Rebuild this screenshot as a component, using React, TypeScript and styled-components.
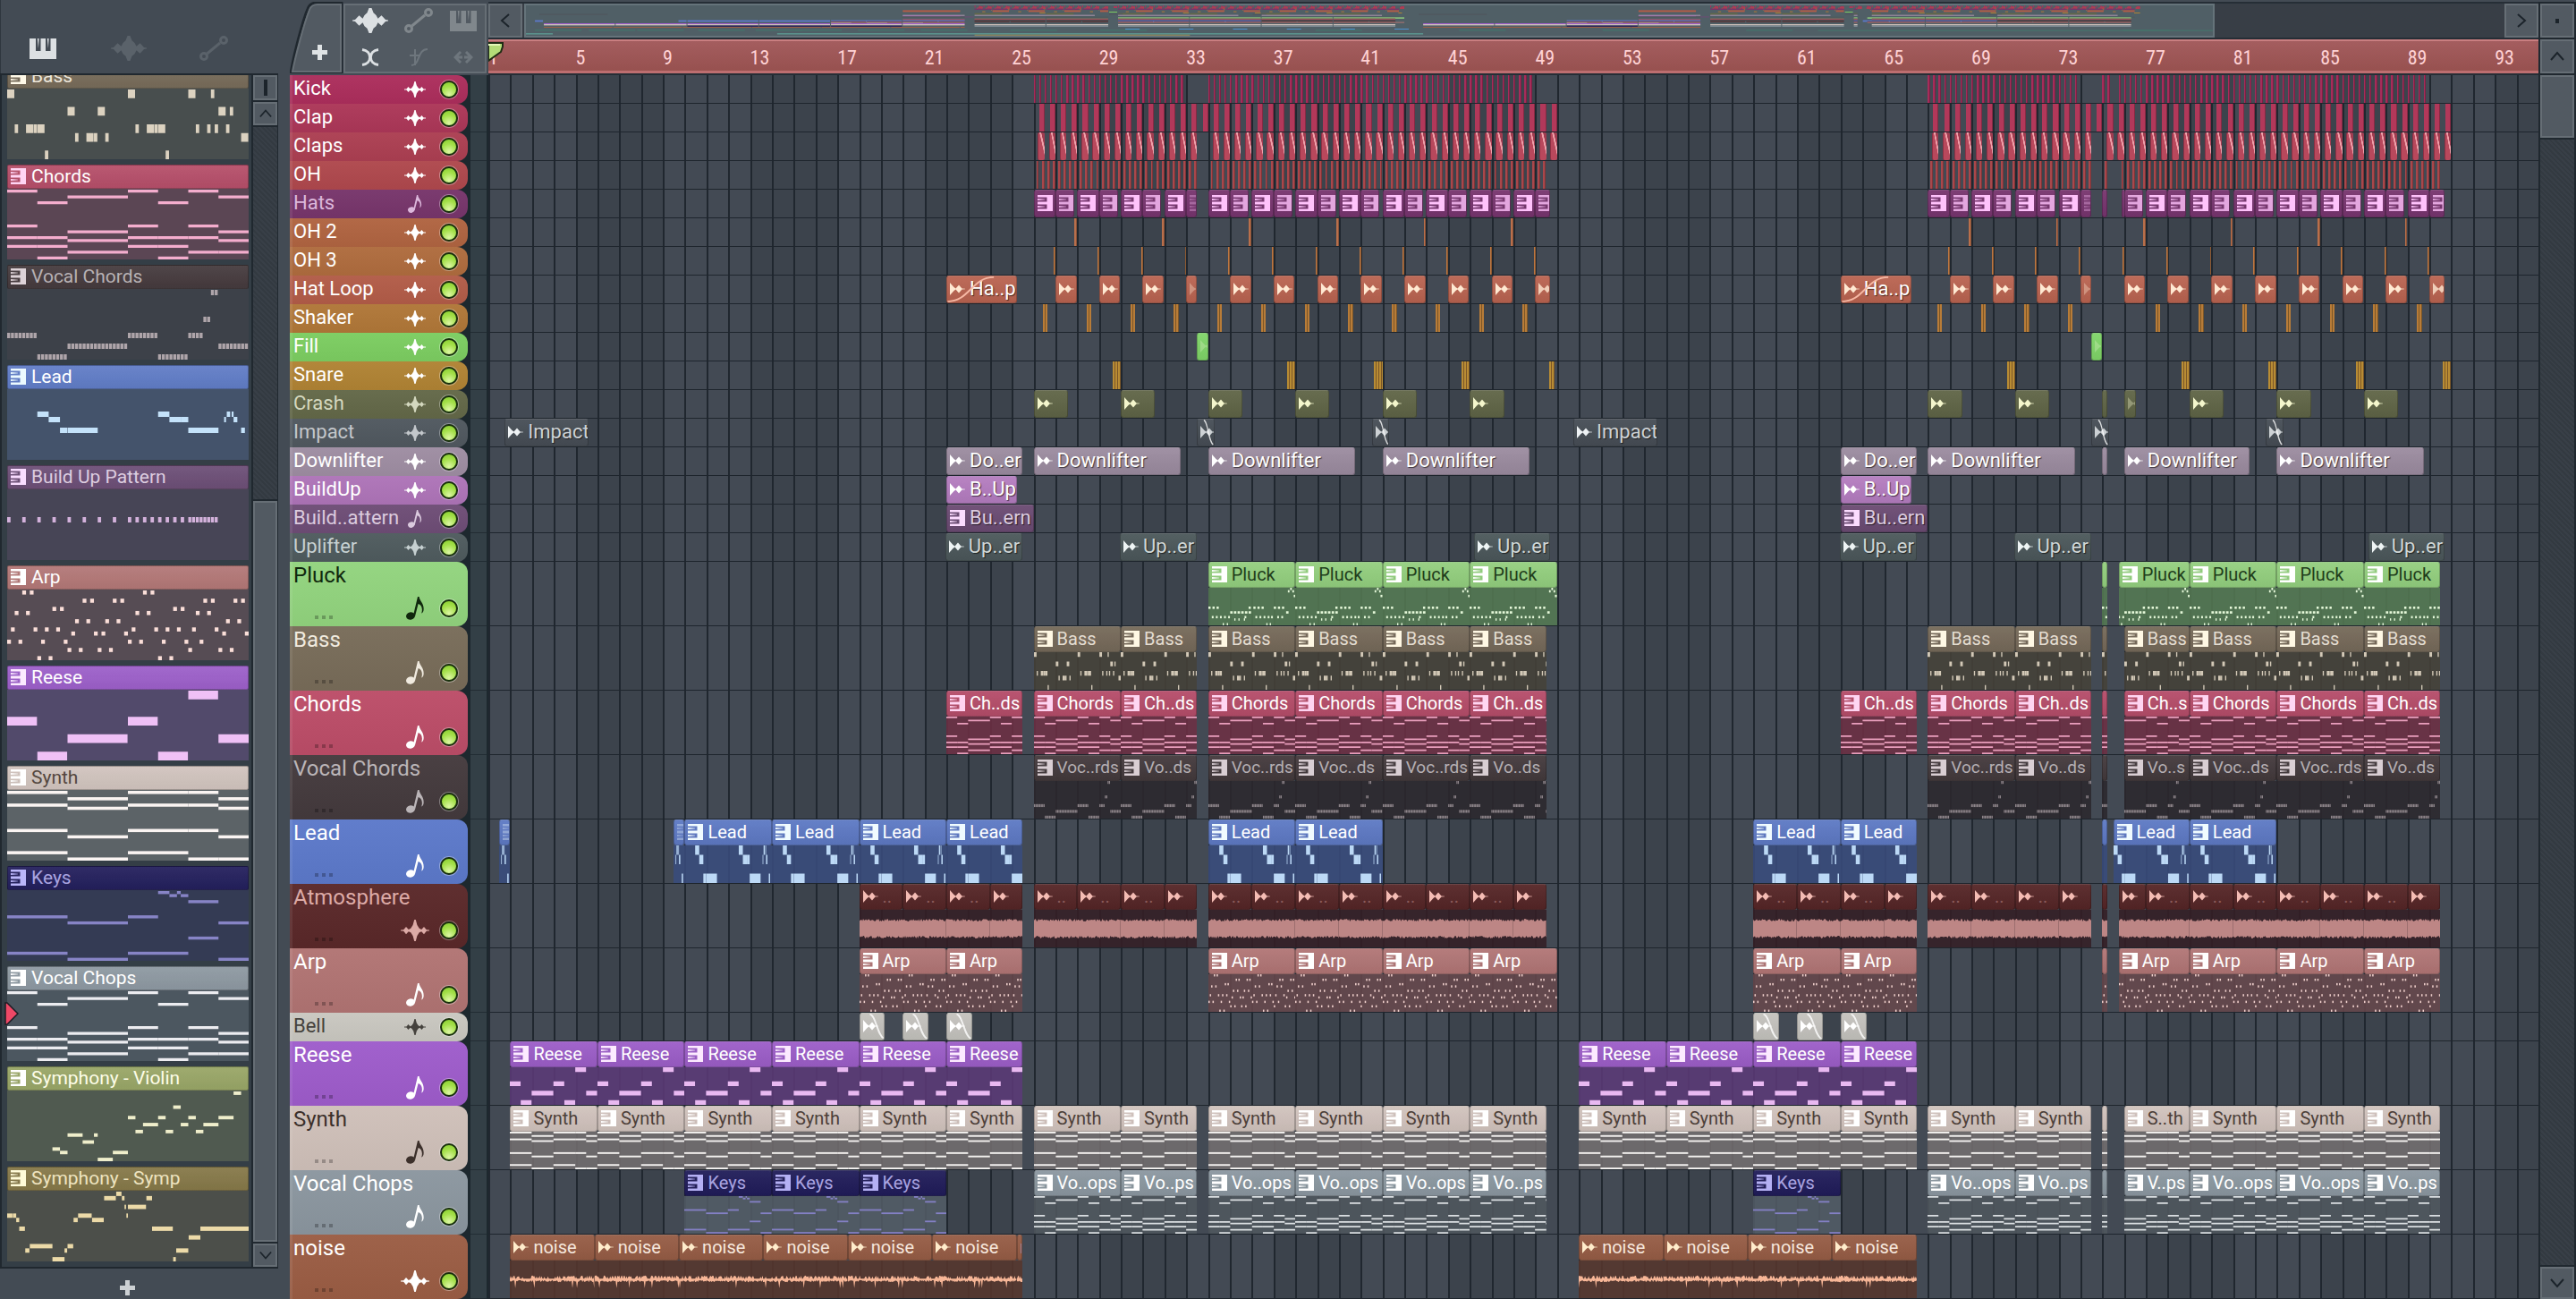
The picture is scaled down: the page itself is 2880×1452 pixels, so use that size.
import React from "react";
import styled, { createGlobalStyle, css } from "styled-components";

/* ------------------------------------------------------------------ */
/* Pattern data: 64 steps per 4-bar pattern, [start, length, row]      */
/* ------------------------------------------------------------------ */

type Note = [number, number, number];
type Pattern = { rows: number; notes: Note[]; listRows?: number; listShift?: number };

const at = (row: number, starts: number[], len = 1): Note[] => starts.map((s) => [s, len, row] as Note);
const column = (start: number, len: number, rows: number[]): Note[] => rows.map((r) => [start, len, r] as Note);
const split = (row: number, from: number, to: number): Note[] =>
  Array.from({ length: to - from }, (_, i) => [from + i, 0.8, row] as Note);

const chordNotes: Note[] = [
  ...column(0, 8, [0, 12, 16, 19]),
  ...column(8, 8, [4, 16, 19, 23]),
  ...column(16, 16, [2, 14, 17, 21]),
  ...column(32, 8, [0, 12, 16, 19]),
  ...column(40, 8, [4, 16, 19, 23]),
  ...column(48, 8, [0, 12, 16, 21]),
  ...column(56, 8, [2, 14, 17, 21]),
];

const patterns: Record<string, Pattern> = {
  bass: {
    rows: 8,
    notes: [
      ...at(0, [0, 32, 48], 1.9), ...at(0, [54], 0.9),
      ...at(2, [16, 24, 56], 1.9), ...at(2, [59], 0.9),
      ...at(4, [2, 7, 34, 39, 50, 53, 55, 58], 0.9), ...at(4, [5, 8, 37, 40], 1.9),
      ...at(5, [18, 23, 26], 0.9), ...at(5, [21, 62], 1.9),
      ...at(7, [10, 42], 0.9),
    ],
  },
  chords: { rows: 24, notes: chordNotes },
  vocalChords: {
    rows: 13,
    notes: [
      ...split(8, 0, 8), ...split(8, 32, 40), ...split(8, 48, 52),
      ...split(10, 16, 32), ...split(10, 56, 64),
      ...split(12, 8, 16), ...split(12, 40, 48),
      ...split(0, 54, 56), ...split(5, 52, 54),
    ],
  },
  lead: {
    rows: 4,
    listRows: 13,
    listShift: 4,
    notes: [
      [8, 3, 0], [11, 3, 1], [14, 1.9, 3], [16, 8, 3],
      [40, 3, 0], [43, 3, 1], [46, 2, 1], [48, 8, 3],
      [58.2, 0.9, 0], [59.5, 0.5, 0], [57.5, 0.5, 1], [60, 1, 1], [62, 1, 3],
    ],
  },
  buildUp: {
    rows: 1,
    listRows: 13,
    listShift: 5,
    notes: [
      ...at(0, [0, 4, 8, 12, 16, 20, 24, 28, 32, 34, 36, 38, 40, 42, 44, 46], 0.9),
      ...split(0, 48, 56),
    ],
  },
  arp: {
    rows: 17,
    notes: [
      ...at(0, [4, 6, 36, 38]),
      ...at(2, [20, 22, 28, 30, 52, 54, 60, 62]),
      ...at(4, [12, 14, 44, 46]),
      ...at(5, [2, 5, 34, 37, 50, 53]),
      ...at(7, [18, 21, 26, 29, 58, 61]),
      ...at(9, [1, 7, 10, 13, 33, 39, 42, 45, 49, 55]),
      ...at(10, [17, 23, 25, 31, 57, 63]),
      ...at(12, [0, 3, 9, 15, 32, 35, 41, 47, 51]),
      ...at(14, [16, 19, 24, 27, 48, 56, 59]),
      ...at(16, [8, 11, 40, 43]),
    ],
  },
  reese: {
    rows: 8,
    notes: [...at(3, [0, 32], 7.9), [16, 15.9, 5], [56, 8, 5], ...at(7, [8, 40], 7.9), [48, 7.9, 0]],
  },
  synth: {
    rows: 22,
    notes: [
      ...column(0, 16, [0, 4, 12, 19]),
      ...column(16, 16, [2, 5, 14, 21]),
      ...column(32, 16, [0, 4, 12, 19]),
      ...column(48, 8, [0, 4, 12, 21]),
      ...column(56, 8, [2, 5, 14, 21]),
    ],
  },
  keys: {
    rows: 23,
    notes: [
      [40, 3, 0], [45, 1, 0], [43, 2, 1], [46, 2, 1], [48, 8, 3],
      [0, 16, 8], [32, 8, 8], [16, 16, 10], [56, 8, 10], [48, 8, 15],
      [0, 16, 20], [32, 16, 20], [16, 16, 22], [56, 8, 22],
    ],
  },
  vocalChops: { rows: 24, notes: chordNotes },
  violin: {
    rows: 20,
    notes: [
      [60, 2, 0], [44, 2, 4], [32, 2, 7], [40, 2, 7], [48, 2, 7], [56, 4, 7],
      [36, 4, 9], [46, 2, 9], [52, 4, 9], [34, 2, 11], [42, 2, 11], [50, 2, 11],
      [16, 4, 12], [23, 1, 12], [20, 3, 14], [12, 2, 16], [14, 2, 17], [28, 4, 17], [24, 4, 19],
    ],
  },
  symp: {
    rows: 16,
    notes: [
      [28.9, 1.4, 0], [25.7, 3.1, 1], [30.4, 0.7, 1], [36.9, 1.5, 1], [31.1, 0.4, 3], [32, 4.8, 3],
      [0, 1.4, 5], [1.5, 0.9, 5], [18.8, 3.6, 5], [31.6, 0.4, 5], [2.4, 0.8, 6], [17.6, 1.1, 6],
      [22.5, 3.1, 6], [3.2, 1.5, 8], [38.4, 5.5, 8], [51.2, 12.8, 8], [48.1, 3.1, 10], [6, 6, 12],
      [16, 1.5, 12], [4.8, 1.1, 13], [15.2, 0.7, 13], [44.8, 3.2, 13], [12, 3.2, 15], [44, 0.7, 15],
    ],
  },
  pluck: {
    rows: 16,
    notes: [
      ...at(0, [60], 1.2), ...at(1, [58.3, 61.6], 1.2), ...at(3, [62.6], 1.4),
      ...at(8, [0, 3, 6, 29.5, 33, 36, 39, 48, 51, 54], 1.6),
      ...at(10, [16, 18.7, 21.4, 24.1, 26.8, 29.5, 57], 1.8),
      ...at(12, [2.5, 5.5, 8.5, 11.5, 14.5, 26.5, 34.5, 37.5, 40.5, 43.5, 46, 50.5, 53.5], 1.3),
      ...at(13, [19, 22, 26], 0.9),
      ...at(15, [10.5, 13.5, 42.5, 45], 0.9),
    ],
  },
};

/* ------------------------------------------------------------------ */
/* Clips and tracks                                                    */
/* ------------------------------------------------------------------ */

const BARS = 94;
const pct = (bars: number) => `${(bars / BARS) * 100}%`;

type ClipKind = "pattern" | "audio" | "hit" | "stripes" | "clap" | "blank";
type Clip = {
  from: number;
  to: number;
  label?: string;
  kind?: ClipKind;
  offset?: number;
  skin?: string;
  dim?: boolean;
  fade?: "in" | "out";
};

type Skin = { head: string; body: string; text: string; icon: string; note: string };
const skins: Record<string, Skin> = {
  pluck: { head: "#93cf7e", body: "#547a53", text: "#1f3d1b", icon: "#ffffff", note: "#e6f9da" },
  bass: { head: "#756959", body: "#464239", text: "#e4ddd1", icon: "#fff8e4", note: "#d3c9b7" },
  chords: { head: "#b54c69", body: "#6d3044", text: "#ffffff", icon: "#ffd5f2", note: "#ea9fbd" },
  vocalChords: { head: "#43393c", body: "#2b282d", text: "#b5afb3", icon: "#d9ced3", note: "#8e858a" },
  lead: { head: "#5d79c4", body: "#394c7d", text: "#ffffff", icon: "#f0fbff", note: "#bcd9f6" },
  atmosphere: { head: "#552526", body: "#341f26", text: "#8a5a5a", icon: "#f4bcb4", note: "#bd8685" },
  arp: { head: "#b17575", body: "#67484c", text: "#ffffff", icon: "#ffffff", note: "#f0d0cc" },
  reese: { head: "#9c5dc8", body: "#5b3a77", text: "#ffffff", icon: "#fceaff", note: "#e9b9f1" },
  synth: { head: "#d1c3bd", body: "#736e70", text: "#4d4039", icon: "#ffffff", note: "#f4f2f0" },
  keys: { head: "#201c59", body: "#525c66", text: "#a8a3e0", icon: "#b4b0f4", note: "#8480c5" },
  vocalChops: { head: "#8b97a0", body: "#50585f", text: "#ffffff", icon: "#ffffff", note: "#dbdfe2" },
  noise: { head: "#965c45", body: "#56372d", text: "#f6e7dd", icon: "#ffeccb", note: "#f7b697" },
};

type Track = {
  name: string;
  color: string;
  text?: string;
  icon: "wave" | "note";
  tall?: boolean;
  skin?: string;
  clips: Clip[];
};

const range = (from: number, to: number, step: number) => {
  const out: number[] = [];
  for (let i = 0; from + i * step <= to + 0.001; i += 1) out.push(from + i * step);
  return out;
};
const hits = (starts: number[], width: number, kind: ClipKind = "hit"): Clip[] =>
  starts.map((s) => ({ from: s, to: s + width, kind }));

/* Consecutive clips from a list of edges, with one label for each. */
const chain = (edges: number[], labels: string[] | string, extra: Partial<Clip> = {}): Clip[] =>
  edges.slice(0, -1).map((from, i) => ({
    from,
    to: edges[i + 1],
    label: Array.isArray(labels) ? labels[i] : labels,
    ...extra,
  }));
const stub = (extra: Partial<Clip> = {}): Clip => ({ from: 74, to: 74.25, kind: "blank", ...extra });

/* The arrangement that the verse and chorus parts share. */
const mainParts = (name: string, cut: string, mid: string, first: string, extra: Partial<Clip> = {}): Clip[] => [
  ...chain([25, 29, 32.5], [name, cut], extra),
  ...chain([33, 37, 41, 45, 48.5], [name, mid, name, cut], extra),
  ...chain([66, 70, 73.5], [name, cut], extra),
  stub(extra),
  { from: 75, to: 78, offset: 1, label: first, ...extra },
  ...chain([78, 82, 86, 89.5], [mid, name, cut], extra),
];

const hatClips = (from: number, to: number, bright: number): Clip[] =>
  range(from, to, 1).map((b) => {
    const pale = (b - bright) % 2 !== 0;
    return { from: b, to: b + (pale ? 0.86 : 1), kind: "pattern" as ClipKind, dim: pale };
  });

const noiseEdges = (from: number, to: number) => [...range(from, to - 0.1, 3.87), to];

const tracks: Track[] = [
  {
    name: "Kick", color: "#ac2e5c", icon: "wave",
    clips: hits([...range(25, 31.75, 0.25), ...range(33, 47.75, 0.25), ...range(66, 72.75, 0.25), 74, 74.25, ...range(74.75, 88.75, 0.25)], 0.1),
  },
  {
    name: "Clap", color: "#ac3758", icon: "wave",
    clips: hits([...range(25.25, 48.75, 0.5), ...range(66.25, 89.75, 0.5)], 0.25),
  },
  {
    name: "Claps", color: "#ac3f52", icon: "wave",
    clips: hits([...range(25.2, 32.2, 0.5), ...range(33.2, 48.7, 0.5), ...range(66.2, 73.2, 0.5), ...range(74.2, 89.7, 0.5)], 0.3, "clap"),
  },
  {
    name: "OH", color: "#af484d", icon: "wave",
    clips: hits([...range(25.12, 32.4, 0.25), ...range(33.12, 48.4, 0.25), ...range(66.12, 73.4, 0.25), 74.12, ...range(74.87, 89.4, 0.25)], 0.12),
  },
  {
    name: "Hats", color: "#77356b", text: "#dcb8dc", icon: "note",
    clips: [
      ...hatClips(25, 31, 25), { from: 32, to: 32.5, kind: "pattern", dim: true },
      ...hatClips(33, 47, 33), { from: 48, to: 48.7, kind: "pattern", dim: true },
      ...hatClips(66, 72, 66), { from: 73, to: 73.5, kind: "pattern", dim: true },
      { from: 74, to: 74.25, kind: "blank" }, { from: 74.9, to: 75, kind: "blank" },
      ...hatClips(75, 88, 66), { from: 89, to: 89.7, kind: "pattern", dim: true },
    ],
  },
  {
    name: "OH 2", color: "#b06441", icon: "wave",
    clips: hits([...range(26.88, 46.88, 4), ...range(67.88, 87.88, 4)], 0.11),
  },
  {
    name: "OH 3", color: "#af6c3e", icon: "wave",
    clips: hits([...range(25.93, 47.93, 2), ...range(66.93, 88.93, 2)], 0.08),
  },
  {
    name: "Hat Loop", color: "#b25c48", icon: "wave",
    clips: [
      { from: 21, to: 24.25, label: "Ha..p", kind: "audio", fade: "in" },
      ...range(26, 30, 2).map((b) => ({ from: b, to: b + 0.97, kind: "audio" as ClipKind })),
      { from: 32, to: 32.5, kind: "audio", dim: true },
      ...range(34, 46, 2).map((b) => ({ from: b, to: b + 0.97, kind: "audio" as ClipKind })),
      { from: 48, to: 48.7, kind: "audio", dim: true },
      { from: 62, to: 65.25, label: "Ha..p", kind: "audio", fade: "in" },
      ...range(67, 71, 2).map((b) => ({ from: b, to: b + 0.97, kind: "audio" as ClipKind })),
      { from: 73, to: 73.5, kind: "audio", dim: true },
      ...range(75, 87, 2).map((b) => ({ from: b, to: b + 0.97, kind: "audio" as ClipKind })),
      { from: 89, to: 89.7, kind: "audio", dim: true },
    ],
  },
  {
    name: "Shaker", color: "#b07738", icon: "wave",
    clips: hits([...range(25.43, 47.43, 2), ...range(66.43, 72.43, 2), ...range(76.43, 88.43, 2)], 0.22, "stripes"),
  },
  {
    name: "Fill", color: "#7ccd61", icon: "wave",
    clips: [{ from: 32.5, to: 33, kind: "audio", dim: true }, { from: 73.5, to: 74, kind: "audio", dim: true }],
  },
  {
    name: "Snare", color: "#b08334", icon: "wave",
    clips: [
      ...hits([28.62, 36.62, 40.62, 44.62], 0.38, "stripes"),
      ...hits([48.62], 0.25, "stripes"),
      ...hits([69.62, 77.62, 81.62, 85.62, 89.62], 0.38, "stripes"),
    ],
  },
  {
    name: "Crash", color: "#636848", text: "#d4d8bf", icon: "wave",
    clips: [
      ...[25, 29, 33, 37, 41, 45, 66, 70, 78, 82, 86].map((b) => ({ from: b, to: b + 1.57, kind: "audio" as ClipKind })),
      stub(), { from: 75, to: 75.55, kind: "audio", dim: true },
    ],
  },
  {
    name: "Impact", color: "#50585f", text: "#c3c7cb", icon: "wave",
    clips: [
      { from: 0.75, to: 4.6, label: "Impact", kind: "audio" },
      { from: 49.75, to: 53.6, label: "Impact", kind: "audio" },
      ...[32.5, 40.5, 73.5, 81.5].map((b) => ({ from: b, to: b + 0.8, kind: "audio" as ClipKind, dim: true, fade: "out" as const })),
    ],
  },
  {
    name: "Downlifter", color: "#9e8da2", icon: "wave",
    clips: [
      { from: 21, to: 24.5, label: "Do..er", kind: "audio" },
      ...[[25, 31.75], [33, 39.75], [41, 47.75], [66, 72.75], [75, 80.75], [82, 88.75]].map(([from, to]) => ({
        from, to, label: "Downlifter", kind: "audio" as ClipKind,
      })),
      { from: 62, to: 65.5, label: "Do..er", kind: "audio" },
      stub(),
    ],
  },
  {
    name: "BuildUp", color: "#ae74b8", icon: "wave",
    clips: [
      { from: 21, to: 24.25, label: "B..Up", kind: "audio" },
      { from: 62, to: 65.25, label: "B..Up", kind: "audio" },
    ],
  },
  {
    name: "Build..attern", color: "#6e4d76", text: "#dbcade", icon: "note",
    clips: [
      { from: 21, to: 25, label: "Bu..ern", kind: "pattern" },
      { from: 62, to: 66, label: "Bu..ern", kind: "pattern" },
    ],
  },
  {
    name: "Uplifter", color: "#4f5b5e", text: "#c6d0d1", icon: "wave",
    clips: [[20.95, 24.5], [28.95, 32.5], [45.2, 48.7], [61.95, 65.5], [69.95, 73.5], [86.2, 89.7]].map(([from, to]) => ({
      from, to, label: "Up..er", kind: "audio" as ClipKind,
    })),
  },
  {
    name: "Pluck", color: "#92d47e", text: "#10280d", icon: "note", tall: true, skin: "pluck",
    clips: [
      ...chain([33, 37, 41, 45, 49], "Pluck"),
      stub(), { from: 74.75, to: 78, offset: 0.75, label: "Pluck" },
      ...chain([78, 82, 86, 89.5], "Pluck"),
    ],
  },
  { name: "Bass", color: "#786c59", text: "#f0eadf", icon: "note", tall: true, skin: "bass", clips: mainParts("Bass", "Bass", "Bass", "Bass") },
  {
    name: "Chords", color: "#bc4d68", icon: "note", tall: true, skin: "chords",
    clips: [
      { from: 21, to: 24.5, label: "Ch..ds" }, { from: 62, to: 65.5, label: "Ch..ds" },
      ...mainParts("Chords", "Ch..ds", "Chords", "Ch..s"),
    ],
  },
  {
    name: "Vocal Chords", color: "#443a3d", text: "#bbb5b8", icon: "note", tall: true, skin: "vocalChords",
    clips: mainParts("Voc..rds", "Vo..ds", "Voc..ds", "Vo..s"),
  },
  {
    name: "Lead", color: "#5c79ca", icon: "note", tall: true, skin: "lead",
    clips: [
      { from: 0.5, to: 1, offset: 3.5, dim: true }, { from: 8.5, to: 9, offset: 3.5, dim: true },
      ...chain([9, 13, 17, 21, 24.5], "Lead"), ...chain([33, 37, 41], "Lead"), ...chain([58, 62, 65.5], "Lead"),
      stub(), { from: 74.5, to: 78, offset: 0.5, label: "Lead" }, { from: 78, to: 82, label: "Lead" },
    ],
  },
  {
    name: "Atmosphere", color: "#5a2829", text: "#dcaaa6", icon: "wave", tall: true, skin: "atmosphere",
    clips: [
      ...chain([17, 19, 21, 23, 24.5], ["..", "..", "..", ""], { kind: "audio" }),
      ...chain([25, 27, 29, 31, 32.5], ["..", "..", "..", ""], { kind: "audio" }),
      ...chain([33, 35, 37, 39, 41, 43, 45, 47, 48.5], ["..", "..", "..", "..", "..", "..", "..", ""], { kind: "audio" }),
      ...chain([58, 60, 62, 64, 65.5], ["..", "..", "..", ""], { kind: "audio" }),
      ...chain([66, 68, 70, 72, 73.5], ["..", "..", "..", ""], { kind: "audio" }),
      stub(),
      ...chain([74.75, 76, 78, 80, 82, 84, 86, 88, 89.5], ["", "..", "..", "..", "..", "..", "..", ""], { kind: "audio" }),
    ],
  },
  {
    name: "Arp", color: "#b17473", icon: "note", tall: true, skin: "arp",
    clips: [
      ...chain([17, 21, 24.5], "Arp"), ...chain([33, 37, 41, 45, 49], "Arp"), ...chain([58, 62, 65.5], "Arp"),
      stub(), { from: 74.75, to: 78, offset: 0.75, label: "Arp" }, ...chain([78, 82, 86, 89.5], "Arp"),
    ],
  },
  {
    name: "Bell", color: "#c9c7c0", text: "#45423d", icon: "wave",
    clips: [17, 19, 21, 58, 60, 62].map((b) => ({ from: b, to: b + 1.18, kind: "audio" as ClipKind, fade: "out" as const })),
  },
  {
    name: "Reese", color: "#9e5ccb", icon: "note", tall: true, skin: "reese",
    clips: [...chain([1, 5, 9, 13, 17, 21, 24.5], "Reese"), ...chain([50, 54, 58, 62, 65.5], "Reese")],
  },
  {
    name: "Synth", color: "#cfc0b9", text: "#3c302b", icon: "note", tall: true, skin: "synth",
    clips: [
      ...chain([1, 5, 9, 13, 17, 21, 24.5], "Synth"), ...chain([50, 54, 58, 62, 65.5], "Synth"),
      ...mainParts("Synth", "Synth", "Synth", "S..th"),
    ],
  },
  {
    name: "Vocal Chops", color: "#8b969f", icon: "note", tall: true, skin: "vocalChops",
    clips: [
      ...chain([9, 13, 17, 21], "Keys", { skin: "keys" }), { from: 58, to: 62, label: "Keys", skin: "keys" },
      ...mainParts("Vo..ops", "Vo..ps", "Vo..ops", "V..ps"),
    ],
  },
  {
    name: "noise", color: "#9b5d44", icon: "wave", tall: true, skin: "noise",
    clips: [
      ...chain(noiseEdges(1, 24.5), "noise", { kind: "audio" }),
      ...chain(noiseEdges(50, 65.5), "noise", { kind: "audio" }),
    ],
  },
];

type ListItem = { name: string; pattern: string; head: string; text: string; icon: string; body: string; note: string; active?: boolean };
const list: ListItem[] = [
  { name: "Bass", pattern: "bass", head: "#776b59", text: "#ece6da", icon: "#fff9e8", body: "#484e4e", note: "#dcd2c0" },
  { name: "Chords", pattern: "chords", head: "#b54e69", text: "#ffffff", icon: "#ffd5f4", body: "#5b4654", note: "#f4adcd" },
  { name: "Vocal Chords", pattern: "vocalChords", head: "#453a3d", text: "#b7b1b4", icon: "#ddd2d7", body: "#3d4149", note: "#afa5aa" },
  { name: "Lead", pattern: "lead", head: "#607cc6", text: "#ffffff", icon: "#ecfaff", body: "#44536b", note: "#c4e2fa" },
  { name: "Build Up Pattern", pattern: "buildUp", head: "#6c4e76", text: "#ddcde0", icon: "#f9dcff", body: "#474556", note: "#d4b2dc" },
  { name: "Arp", pattern: "arp", head: "#b27776", text: "#ffffff", icon: "#ffffff", body: "#564c54", note: "#fbdfd9" },
  { name: "Reese", pattern: "reese", head: "#9c5fc9", text: "#ffffff", icon: "#fbeaff", body: "#524a6b", note: "#efc0f6" },
  { name: "Synth", pattern: "synth", head: "#d0c3bd", text: "#54473f", icon: "#ffffff", body: "#5c6367", note: "#faf4f2" },
  { name: "Keys", pattern: "keys", head: "#231f5c", text: "#a9a4e0", icon: "#bab6fa", body: "#343b54", note: "#8784c6" },
  { name: "Vocal Chops", pattern: "vocalChops", head: "#8d98a1", text: "#ffffff", icon: "#ffffff", body: "#4c5760", note: "#ececf0", active: true },
  { name: "Symphony - Violin", pattern: "violin", head: "#98a566", text: "#fdfde8", icon: "#ffffff", body: "#505a50", note: "#efeecb" },
  { name: "Symphony - Symp", pattern: "symp", head: "#857848", text: "#eee4c0", icon: "#fffbd8", body: "#4c4f4a", note: "#ecdaa8" },
];

/* ------------------------------------------------------------------ */
/* Styles                                                              */
/* ------------------------------------------------------------------ */

const GlobalStyle = createGlobalStyle`
  * { box-sizing: border-box; }
  body {
    margin: 0;
    background: #434b54;
    font-family: Roboto, "Open Sans", sans-serif;
    overflow: hidden;
  }
  button, input { margin: 0; padding: 0; border: 0; font: inherit; }
`;

const hatch = "repeating-linear-gradient(45deg, #333a41 0 2px, #383f47 2px 4px)";

const Shell = styled.div`
  display: flex;
  height: 100vh;
  color: #fff;
`;

const Browser = styled.aside`
  display: flex;
  flex-direction: column;
  width: 311px;
  flex: none;
`;

const BrowserTabs = styled.div`
  display: flex;
  height: 82px;
  padding: 36px 52px 0 27px;
  justify-content: space-between;
  border-left: 1px solid #2f373f;
`;

const IconButton = styled.button<{ $tone?: string }>`
  display: grid;
  place-items: center;
  width: 40px;
  height: 36px;
  background: none;
  color: ${(p) => p.$tone ?? "#dce0e3"};
`;

const BrowserBody = styled.div`
  flex: 1;
  min-height: 0;
  display: flex;
  border: 2px solid #20282f;
  border-right-width: 1px;
`;

const PatternList = styled.div`
  flex: 1;
  min-width: 0;
  display: flex;
  flex-direction: column;
  justify-content: flex-end;
  gap: 6px;
  padding: 0 3px 6px 6px;
  overflow: hidden;
  background: #343e46;
  border-right: 2px solid #20282f;
`;

const PatternItem = styled.article`
  position: relative;
  flex: none;
  height: 106px;
  display: flex;
  flex-direction: column;
`;

const PatternHead = styled.div<{ $color: string; $text: string }>`
  display: flex;
  align-items: center;
  gap: 6px;
  height: 27px;
  padding: 0 0 2px 3px;
  border: 1px solid rgba(0, 0, 0, 0.25);
  border-radius: 2px;
  background: linear-gradient(rgba(255, 255, 255, 0.06), rgba(0, 0, 0, 0.04)), ${(p) => p.$color};
  color: ${(p) => p.$text};
  font-size: 21px;
  line-height: 24px;
`;

const PatternBody = styled.div<{ $color: string; $note: string }>`
  flex: 1;
  min-height: 0;
  padding-top: 1px;
  background: ${(p) => p.$color};
  color: ${(p) => p.$note};
`;

const ActiveMark = styled.svg`
  position: absolute;
  left: -3px;
  top: 40px;
`;

const Stretch = styled.svg`
  display: block;
  width: 100%;
  height: 100%;
`;

const ScrollColumn = styled.div<{ $width: number }>`
  display: flex;
  flex-direction: column;
  flex: none;
  gap: 2px;
  width: ${(p) => p.$width}px;
  background: #20282f;
`;

const bevel = css`
  background: #525a62;
  border: 2px solid #666e75;
  color: #1c242b;
`;

const ScrollButton = styled.button<{ $height: number }>`
  ${bevel}
  display: grid;
  place-items: center;
  flex: none;
  height: ${(p) => p.$height}px;
`;

const ScrollTrack = styled.div<{ $grow: number }>`
  flex: ${(p) => p.$grow} 1 0;
  background: ${hatch};
`;

const ScrollThumb = styled.div<{ $grow: number }>`
  ${bevel}
  flex: ${(p) => p.$grow} 1 0;
`;

const AddPattern = styled.button`
  display: grid;
  place-items: center;
  height: 34px;
  padding: 8px 26px 0 0;
  background: none;
  color: #ccd0d3;
`;

const Playlist = styled.main`
  flex: 1;
  min-width: 0;
  display: flex;
  flex-direction: column;
  padding: 2px 0 0 13px;
`;

const TopRow = styled.div`
  display: flex;
  height: 82px;
  flex: none;
`;

const Corner = styled.div`
  position: relative;
  display: flex;
  width: 222px;
  gap: 2px;
  padding: 2px 2px 2px 0;
`;

const CornerShape = styled.svg`
  position: absolute;
  left: 0;
  top: 0;
`;

const AddTrack = styled.button`
  position: relative;
  width: 58px;
  padding: 34px 0 0 8px;
  background: none;
  color: #dfe3e5;
`;

const Tools = styled.div`
  ${bevel}
  flex: 1;
  position: relative;
  display: grid;
  grid-template-columns: 56px 52px 1fr;
  grid-template-rows: 34px 1fr;
  row-gap: 6px;
  justify-items: center;
  align-items: center;
`;

const TopMain = styled.div`
  flex: 1;
  min-width: 0;
  display: flex;
  flex-direction: column;
  gap: 2px;
  background: #262e36;
  padding: 2px 0 2px;
`;

const OverviewRow = styled.div`
  display: flex;
  gap: 2px;
  height: 38px;
  background: #383e46;
`;

const NavButton = styled.button`
  ${bevel}
  display: grid;
  place-items: center;
  width: 38px;
  flex: none;
`;

const Overview = styled.div`
  flex: 1891 1 0;
  height: 38px;
  border: 2px solid #65737a;
  background: #505f66;
`;

const OverviewRest = styled.div`
  flex: 321 1 0;
`;

const Ruler = styled.div`
  position: relative;
  flex: 1;
  overflow: hidden;
  border-top: 2px solid #c97e80;
  border-bottom: 3px solid #bd6e70;
  background: linear-gradient(#a45d5f, #97514f);
`;

const BarNumber = styled.span`
  position: absolute;
  top: 6px;
  font-family: "Roboto Condensed", "Liberation Sans Narrow", Roboto, sans-serif;
  font-size: 22px;
  line-height: 26px;
  color: #ffd2d4;
`;

const PlayMarker = styled.svg`
  position: absolute;
  left: 0;
  top: 1px;
`;

const Arrangement = styled.div`
  flex: 1;
  min-height: 0;
  display: flex;
  flex-direction: column;
  overflow: hidden;
`;

const TrackRow = styled.section<{ $tall?: boolean }>`
  display: flex;
  flex: none;
  height: ${(p) => (p.$tall ? 72 : 32)}px;
  background: #1d282e;
`;

const TrackHead = styled.div<{ $tall?: boolean; $color: string; $text: string }>`
  display: grid;
  grid-template-columns: 1fr 34px 42px;
  grid-template-rows: ${(p) => (p.$tall ? "32px 1fr" : "1fr")};
  align-items: center;
  justify-items: center;
  width: 199px;
  margin-right: 3px;
  padding-left: 4px;
  border-radius: 0 12px 12px 0;
  background: linear-gradient(rgba(255, 255, 255, 0.03), rgba(0, 0, 0, 0.04)), ${(p) => p.$color};
  box-shadow: inset 3px 0 0 rgba(255, 255, 255, 0.08);
  color: ${(p) => p.$text};
`;

const TrackName = styled.span<{ $tall?: boolean }>`
  justify-self: start;
  width: ${(p) => (p.$tall ? "auto" : "118px")};
  padding-bottom: 2px;
  grid-column: ${(p) => (p.$tall ? "1 / -1" : "1")};
  font-size: ${(p) => (p.$tall ? 24 : 22)}px;
  line-height: 28px;
  white-space: nowrap;
`;

const Dots = styled.span`
  display: flex;
  gap: 4px;
  align-self: end;
  justify-self: start;
  margin: 0 0 8px 24px;
  i {
    width: 4px;
    height: 4px;
    background: rgba(0, 0, 0, 0.25);
  }
`;

const Led = styled.input`
  appearance: none;
  width: 20px;
  height: 20px;
  border: 2px solid #18300c;
  border-radius: 50%;
  background: radial-gradient(circle at 50% 85%, #dcf6a4, #a4e04a 55%, #86cc2c);
  box-shadow: 0 0 0 1px rgba(255, 255, 255, 0.35);
`;

const LaneMargin = styled.div`
  width: 18px;
  background: #333f46;
  border-bottom: 1px solid #222c33;
`;

const Lane = styled.div`
  position: relative;
  flex: 1;
  min-width: 0;
  overflow: hidden;
  margin-left: 2px;
  background:
    linear-gradient(#1e252d, #1e252d) bottom / 100% 1px no-repeat,
    repeating-linear-gradient(90deg, #20272f 0 2px, transparent 2px calc(100% / ${BARS})),
    repeating-linear-gradient(90deg, #434a54 0 calc(400% / ${BARS}), #3c434c calc(400% / ${BARS}) calc(800% / ${BARS}));
`;

const ClipBox = styled.div<{ $tall?: boolean }>`
  position: absolute;
  top: 0;
  height: ${(p) => (p.$tall ? 71 : 31)}px;
  display: flex;
  flex-direction: column;
  overflow: hidden;
`;

const ClipHead = styled.div<{ $color: string; $text: string; $tall?: boolean; $tight?: boolean }>`
  position: relative;
  display: flex;
  align-items: center;
  gap: 5px;
  height: ${(p) => (p.$tall ? 29 : 31)}px;
  padding: 0 0 1px 3px;
  overflow: hidden;
  border: 1px solid rgba(0, 0, 0, 0.22);
  border-top-color: rgba(255, 255, 255, 0.16);
  border-radius: 3px;
  background: linear-gradient(rgba(255, 255, 255, 0.05), rgba(0, 0, 0, 0.06)), ${(p) => p.$color};
  color: ${(p) => p.$text};
  font-size: ${(p) => (p.$tight ? 19 : p.$tall ? 20 : 22)}px;
  line-height: 26px;
  white-space: nowrap;
  text-shadow: ${(p) => (p.$tall ? "none" : "1px 1px 1px rgba(0, 0, 0, 0.6)")};
  svg {
    flex: none;
  }
`;

const ClipBody = styled.div<{ $color: string; $note: string }>`
  flex: 1;
  min-height: 0;
  background: ${(p) => p.$color}e0;
  color: ${(p) => p.$note};
`;

const Hit = styled.div<{ $color: string }>`
  position: absolute;
  top: 0;
  height: 31px;
  background: ${(p) => p.$color};
  border-right: 1px solid rgba(0, 0, 0, 0.25);
`;

const ClapHit = styled(Hit)`
  border: 0;
  border-left: 1px solid #8c3044;
  border-radius: 2px;
  background: linear-gradient(to top right, #b8485c 56%, #f0a0aa 60% 70%, #a03c50 74%);
`;

const StripeHit = styled(Hit)`
  background: repeating-linear-gradient(90deg, ${(p) => p.$color} 0 2px, #7c5728 2px 3px);
  border-right: 0;
`;

const FadeCurve = styled.svg`
  position: absolute;
  inset: 0;
  width: 100%;
  height: 100%;
`;

/* ------------------------------------------------------------------ */
/* Icons                                                               */
/* ------------------------------------------------------------------ */

const PianoSide = ({ color, opacity = 1 }: { color: string; opacity?: number }) => (
  <svg width="17" height="18" viewBox="0 0 17 18" opacity={opacity} aria-hidden="true">
    <path fill={color} d="M0 0H17V18H0V15.500H10.500V10.500H0V7.500H10.500V2.500H0Z" />
    <path fill={color} d="M0 4L8 4.800V5.200L0 6ZM0 12L8 12.800V13.200L0 14Z" />
  </svg>
);

const AudioMark = ({ color, opacity = 1 }: { color: string; opacity?: number }) => (
  <svg width="17" height="18" viewBox="0 0 17 18" opacity={opacity} aria-hidden="true">
    <path fill={color} d="M0 2L4.5 7L6.500 8.6L10 4.5L13.500 8.5L17 8.700V9.3L13.500 9.5L10 13.5L6.500 9.4L4.5 11L0 16Z" />
  </svg>
);

const Wave = ({ w, h, slim }: { w: number; h: number; slim?: boolean }) => (
  <svg width={w} height={h} viewBox="0 0 40 32" preserveAspectRatio="none" aria-hidden="true">
    <path
      fill="currentColor"
      d={
        slim
          ? "M0 15.200L4 15L7.500 10.500L11 14.500L14 13L17 8L19 0H21L23 8L26 13L29 14.500L32.500 10.500L36 15L40 15.200V16.800L36 17L32.500 21.500L29 17.500L26 19L23 24L21 32H19L17 24L14 19L11 17.500L7.500 21.500L4 17L0 16.800Z"
          : "M0 15.400L3 14.800L7.500 9.500L11.500 13.500L13.500 9L16.500 6L18.500 0H21.500L23.500 6L26.500 9L28.500 13.500L32.500 9.500L37 14.800L40 15.400V16.600L37 17.200L32.500 22.500L28.500 18.500L26.500 23L23.500 26L21.500 32H18.500L16.500 26L13.500 23L11.500 18.500L7.500 22.500L3 17.200L0 16.600Z"
      }
    />
  </svg>
);

const NoteIcon = ({ h }: { h: number }) => (
  <svg width={(h * 20) / 26} height={h} viewBox="0 0 20 26" aria-hidden="true">
    <ellipse cx="5" cy="21.5" rx="5" ry="4.2" transform="rotate(-15 5 21.5)" fill="currentColor" />
    <path d="M8 21L13 0H14.6C15 5 21 8 19.4 16C19 17 18 18.5 17.2 18.5C19.2 12 16.5 9 13.6 8L10 22Z" fill="currentColor" />
  </svg>
);

const PianoIcon = () => (
  <svg width="30" height="23" viewBox="0 0 30 23" aria-hidden="true">
    <path fill="currentColor" d="M0 0H7V14H12.500V0H18V14H23.500V0H30V23H0Z" />
    <path fill="currentColor" d="M8.800 0H10.600L9.900 11ZM19.800 0H21.600L20.900 11Z" />
  </svg>
);

const CurveIcon = () => (
  <svg width="32" height="28" viewBox="0 0 32 28" fill="none" stroke="currentColor" strokeWidth="3" aria-hidden="true">
    <circle cx="5" cy="23" r="3.5" />
    <circle cx="27" cy="5" r="3.5" />
    <path d="M8.5 20L23 8" />
  </svg>
);

const PlusIcon = () => (
  <svg width="17" height="17" viewBox="0 0 17 17" aria-hidden="true">
    <path fill="currentColor" d="M6 0H11V6H17V11H11V17H6V11H0V6H6Z" />
  </svg>
);

const Chevron = ({ dir, size = 16 }: { dir: "up" | "down" | "left" | "right"; size?: number }) => {
  const turn = { up: 0, right: 90, down: 180, left: 270 }[dir];
  return (
    <svg width={size} height={size} viewBox="0 0 16 16" aria-hidden="true">
      <path d="M1 12L8 4L15 12" fill="none" stroke="currentColor" strokeWidth="2" transform={`rotate(${turn} 8 8)`} />
    </svg>
  );
};

/* ------------------------------------------------------------------ */
/* Parts                                                               */
/* ------------------------------------------------------------------ */

const Notes = ({ pattern, offset = 0, bars = 4, inList }: { pattern: Pattern; offset?: number; bars?: number; inList?: boolean }) => {
  const rows = (inList && pattern.listRows) || pattern.rows;
  const shift = (inList && pattern.listShift) || 0;
  return (
    <Stretch viewBox={`${offset * 16} 0 ${bars * 16} ${rows}`} preserveAspectRatio="none" aria-hidden="true">
      {pattern.notes.map(([start, len, row], i) => (
        <rect key={i} x={start} y={row + shift} width={len} height={1} fill="currentColor" />
      ))}
    </Stretch>
  );
};

const random = (i: number) => {
  const v = Math.sin(i * 127.1 + 11.7) * 43758.5453;
  return v - Math.floor(v);
};

const Waveform = ({ loud, from, bars }: { loud: boolean; from: number; bars: number }) => {
  const width = Math.round(bars * 24);
  const top: string[] = [];
  const bottom: string[] = [];
  for (let x = 0; x <= width; x += 1) {
    const n = random(x + from * 24);
    const m = random(x * 3 + from * 31);
    const up = loud ? 8 + n * 3 : 0.8 + (n > 0.5 ? n * 3.5 : 0);
    const down = loud ? 8 + m * 3 : 0.8 + (m > 0.96 ? 9 : m * 2.5);
    top.push(`${x} ${(21 - up).toFixed(1)}`);
    bottom.unshift(`${x} ${(21 + down).toFixed(1)}`);
  }
  return (
    <Stretch viewBox={`0 0 ${width} 42`} preserveAspectRatio="none" aria-hidden="true">
      <path d={`M${top.join("L")}L${bottom.join("L")}Z`} fill="currentColor" />
    </Stretch>
  );
};

const hitTone: Record<string, string> = {
  Kick: "#a62c5a", Clap: "#b2385a", OH: "#a9474b", "OH 2": "#b96f4b", "OH 3": "#bd7742", Shaker: "#b87c38", Snare: "#b88c34",
};
const clipTone: Record<string, { color: string; text: string; icon: string }> = {
  Hats: { color: "#77346e", text: "#fff", icon: "#ffc2fb" },
  "Hat Loop": { color: "#b96350", text: "#fff", icon: "#ffe9d2" },
  Fill: { color: "#7fd568", text: "#fff", icon: "#d8f0c0" },
  Crash: { color: "#5f6446", text: "#fff", icon: "#f4f6cc" },
  Impact: { color: "#464d55", text: "#ced2d5", icon: "#eef2f4" },
  Downlifter: { color: "#9b8b9f", text: "#fff", icon: "#fff" },
  BuildUp: { color: "#b47cbf", text: "#fff", icon: "#fff" },
  "Build..attern": { color: "#6a4a72", text: "#dccbdf", icon: "#fbdcff" },
  Uplifter: { color: "#4b575a", text: "#cfd6d6", icon: "#eef4f4" },
  Bell: { color: "#c4c2bd", text: "#45423d", icon: "#fff" },
};

const ClipView = ({ clip, track }: { clip: Clip; track: Track }) => {
  const place = { left: pct(clip.from), width: pct(clip.to - clip.from) };
  const kind = clip.kind ?? "pattern";
  if (kind === "hit") return <Hit $color={hitTone[track.name]} style={place} />;
  if (kind === "clap") return <ClapHit $color={track.color} style={place} />;
  if (kind === "stripes") return <StripeHit $color={hitTone[track.name]} style={place} />;

  const patternName = clip.skin ?? track.skin ?? "";
  const skin = skins[patternName];
  const tone = skin ? { color: skin.head, text: skin.text, icon: skin.icon } : clipTone[track.name];
  const bars = clip.to - clip.from;
  const faded = clip.dim ? (bars < 0.6 ? 0.35 : 0.8) : 1;
  return (
    <ClipBox $tall={track.tall} style={place}>
      <ClipHead $color={tone.color} $text={tone.text} $tall={track.tall} $tight={patternName === "vocalChords"}>
        {kind === "pattern" && <PianoSide color={tone.icon} opacity={faded} />}
        {kind === "audio" && bars > 0.4 && <AudioMark color={tone.icon} opacity={faded} />}
        {clip.label}
        {clip.fade === "in" && (
          <FadeCurve viewBox="0 0 80 31" preserveAspectRatio="none">
            <path d="M0 30C26 30 28 1 54 1" fill="none" stroke="#f6b8a4" strokeWidth="2" />
          </FadeCurve>
        )}
        {clip.fade === "out" && (
          <FadeCurve viewBox="0 0 28 31" preserveAspectRatio="none">
            <path d="M11 1C18 1 20 28 28 30" fill="none" stroke="#ffffff" strokeWidth="2" opacity="0.8" />
          </FadeCurve>
        )}
      </ClipHead>
      {track.tall && skin && (
        <ClipBody $color={skin.body} $note={skin.note}>
          {track.icon === "wave" ? (
            <Waveform loud={track.name === "Atmosphere"} from={clip.from} bars={bars} />
          ) : (
            <Notes pattern={patterns[patternName]} offset={clip.offset} bars={bars} />
          )}
        </ClipBody>
      )}
    </ClipBox>
  );
};

const overviewRows: [number, number][] = [
  [0, 2.4], [1, 2], [2, 2], [2.6, 2], [3.6, 1.4], [4.4, 1], [5, 1], [5.4, 2], [6.6, 1], [7, 1], [8, 1], [8.6, 2],
  [9.4, 1.6], [10.6, 1.2], [11.4, 1], [12.4, 1], [12.6, 1.4], [13.4, 1.4], [14.4, 1.4], [15.4, 1], [16.2, 1],
  [16.6, 1.8], [17.8, 1], [18.6, 1], [19.6, 1], [20, 1.2], [21, 1.4], [22.6, 1.2], [24, 1],
];

const MiniMap = () => (
  <Stretch viewBox={`0 0 ${BARS} 34`} preserveAspectRatio="none" aria-hidden="true">
    {tracks.map((track, t) =>
      track.clips.map((clip, i) => (
        <rect
          key={`${t}-${i}`}
          x={clip.from}
          y={overviewRows[t][0]}
          width={clip.to - clip.from - 0.05}
          height={overviewRows[t][1]}
          fill={clip.skin ? skins[clip.skin].head : track.color}
        />
      )),
    )}
    {[0.5, 3.5, 6.2, 9.6, 12.8, 15, 18.5, 22, 27, 32, 44, 52, 60, 68, 89].map((x) => (
      <rect key={x} x={x} y="27" width="2.6" height="1.6" fill="#47706a" />
    ))}
    <rect x="0" y="31" width="1.5" height="1.6" fill="#5b928c" />
    <rect x="14" y="31" width="36" height="1.6" fill="#5b928c" />
    <rect x="72" y="27.5" width="22" height="1.4" fill="#47706a" />
    <rect x="25" y="32.8" width="12" height="0.8" fill="#b09a55" />
    {[33.4, 36.4, 39.4, 42.4, 45.4, 48.4].map((x) => (
      <rect key={x} x={x} y="26" width="0.8" height="1" fill="#4c94d4" />
    ))}
  </Stretch>
);

const TrackView = ({ track }: { track: Track }) => {
  const text = track.text ?? "#ffffff";
  return (
    <TrackRow $tall={track.tall}>
      <TrackHead $tall={track.tall} $color={track.color} $text={text}>
        <TrackName $tall={track.tall}>{track.name}</TrackName>
        {track.tall && (
          <Dots>
            <i />
            <i />
            <i />
          </Dots>
        )}
        {track.icon === "wave" ? (
          track.tall ? <Wave w={32} h={24} slim /> : <Wave w={24} h={18} slim />
        ) : (
          <NoteIcon h={track.tall ? 26 : 20} />
        )}
        <Led type="checkbox" defaultChecked aria-label={`Mute ${track.name}`} />
      </TrackHead>
      <LaneMargin />
      <Lane>
        {track.clips.map((clip, i) => (
          <ClipView key={i} clip={clip} track={track} />
        ))}
      </Lane>
    </TrackRow>
  );
};

const Body = styled.div`
  flex: 1;
  min-height: 0;
  display: flex;
`;

const TopRight = styled.div`
  display: flex;
  flex-direction: column;
  gap: 2px;
  width: 42px;
  padding: 2px 2px 0 2px;
  background: #20282f;
`;

const SideScroll = styled.div`
  display: flex;
  width: 42px;
  padding: 0 2px;
  background: #20282f;
`;

export default function App() {
  return (
    <>
      <GlobalStyle />
      <Shell>
        <Browser>
          <BrowserTabs>
            <IconButton aria-label="Patterns">
              <PianoIcon />
            </IconButton>
            <IconButton aria-label="Audio clips" $tone="#5a626a">
              <Wave w={40} h={28} />
            </IconButton>
            <IconButton aria-label="Automation clips" $tone="#5a626a">
              <CurveIcon />
            </IconButton>
          </BrowserTabs>
          <BrowserBody>
            <PatternList>
              {list.map((item) => (
                <PatternItem key={item.name}>
                  <PatternHead $color={item.head} $text={item.text}>
                    <PianoSide color={item.icon} />
                    {item.name}
                  </PatternHead>
                  <PatternBody $color={item.body} $note={item.note}>
                    <Notes pattern={patterns[item.pattern]} inList />
                  </PatternBody>
                  {item.active && (
                    <ActiveMark width="16" height="26" viewBox="0 0 16 26" aria-hidden="true">
                      <path d="M1 1L3 1L15 13L3 25L1 25Z" fill="#ee4866" stroke="#1c1c24" strokeWidth="1.5" />
                    </ActiveMark>
                  )}
                </PatternItem>
              ))}
            </PatternList>
            <ScrollColumn $width={27}>
              <ScrollButton $height={28} aria-label="Options">
                <svg width="4" height="18" aria-hidden="true">
                  <rect width="4" height="18" fill="currentColor" />
                </svg>
              </ScrollButton>
              <ScrollButton $height={26} aria-label="Scroll up">
                <Chevron dir="up" size={14} />
              </ScrollButton>
              <ScrollTrack $grow={418} />
              <ScrollThumb $grow={828} />
              <ScrollButton $height={26} aria-label="Scroll down">
                <Chevron dir="down" size={14} />
              </ScrollButton>
            </ScrollColumn>
          </BrowserBody>
          <AddPattern aria-label="Add pattern">
            <PlusIcon />
          </AddPattern>
        </Browser>

        <Playlist>
          <TopRow>
            <Corner>
              <CornerShape width="60" height="80" viewBox="0 0 60 80" aria-hidden="true">
                <path d="M1 80C4 62 14 22 20 8C22 3 25 1 30 1H58V79H1Z" fill="#525a62" stroke="#20282f" strokeWidth="3" />
                <path d="M3 78C6 62 16 24 22 9C23.5 5 26 3 31 3H57V78Z" fill="none" stroke="#666e75" strokeWidth="2" />
              </CornerShape>
              <AddTrack aria-label="Add track">
                <PlusIcon />
              </AddTrack>
              <Tools>
                <IconButton aria-label="Audio">
                  <Wave w={40} h={28} />
                </IconButton>
                <IconButton aria-label="Automation" $tone="#80878c">
                  <CurveIcon />
                </IconButton>
                <IconButton aria-label="Piano" $tone="#80878c">
                  <PianoIcon />
                </IconButton>
                <IconButton aria-label="Crossfade">
                  <svg width="20" height="20" viewBox="0 0 20 20" fill="none" stroke="currentColor" strokeWidth="3" aria-hidden="true">
                    <path d="M1 1.5C12.500 3 12.500 17 1 18.5M19 1.5C7.500 3 7.500 17 19 18.5" />
                  </svg>
                </IconButton>
                <IconButton aria-label="Slope" $tone="#6e767d">
                  <svg width="20" height="22" viewBox="0 0 20 22" fill="none" stroke="currentColor" strokeWidth="2" aria-hidden="true">
                    <path d="M0 9H12M6 2V20M2 20C12 20 8 2 20 2" />
                  </svg>
                </IconButton>
                <IconButton aria-label="Stretch" $tone="#6e767d">
                  <svg width="22" height="14" viewBox="0 0 22 14" fill="none" stroke="currentColor" strokeWidth="3" aria-hidden="true">
                    <path d="M8 1L2 7L8 13M14 1L20 7L14 13M4 7H10M12 7H18" />
                  </svg>
                </IconButton>
              </Tools>
            </Corner>
            <TopMain>
              <OverviewRow>
                <NavButton aria-label="Scroll left">
                  <Chevron dir="left" />
                </NavButton>
                <Overview>
                  <MiniMap />
                </Overview>
                <OverviewRest />
                <NavButton aria-label="Scroll right">
                  <Chevron dir="right" />
                </NavButton>
              </OverviewRow>
              <Ruler>
                {range(0, 92, 4).map((b) => (
                  <BarNumber key={b} style={{ left: pct(b) }}>
                    {b + 1}
                  </BarNumber>
                ))}
                <PlayMarker width="18" height="22" viewBox="0 0 18 22" aria-hidden="true">
                  <path d="M0 1H16V5L14 11L0 21Z" fill="#b4dc78" stroke="#1f2c14" strokeWidth="2" />
                  <path d="M0 3H13" stroke="#e4f8b8" strokeWidth="2" />
                </PlayMarker>
              </Ruler>
            </TopMain>
            <TopRight>
              <ScrollButton $height={38} aria-label="Menu">
                <svg width="4" height="5" aria-hidden="true">
                  <rect width="4" height="5" fill="currentColor" />
                </svg>
              </ScrollButton>
              <ScrollButton $height={38} aria-label="Scroll up">
                <Chevron dir="up" />
              </ScrollButton>
            </TopRight>
          </TopRow>
          <Body>
            <Arrangement>
              {tracks.map((track) => (
                <TrackView key={track.name} track={track} />
              ))}
            </Arrangement>
            <SideScroll>
              <ScrollColumn $width={38}>
                <ScrollThumb $grow={66} />
                <ScrollTrack $grow={1262} />
                <ScrollButton $height={36} aria-label="Scroll down">
                  <Chevron dir="down" />
                </ScrollButton>
              </ScrollColumn>
            </SideScroll>
          </Body>
        </Playlist>
      </Shell>
    </>
  );
}
